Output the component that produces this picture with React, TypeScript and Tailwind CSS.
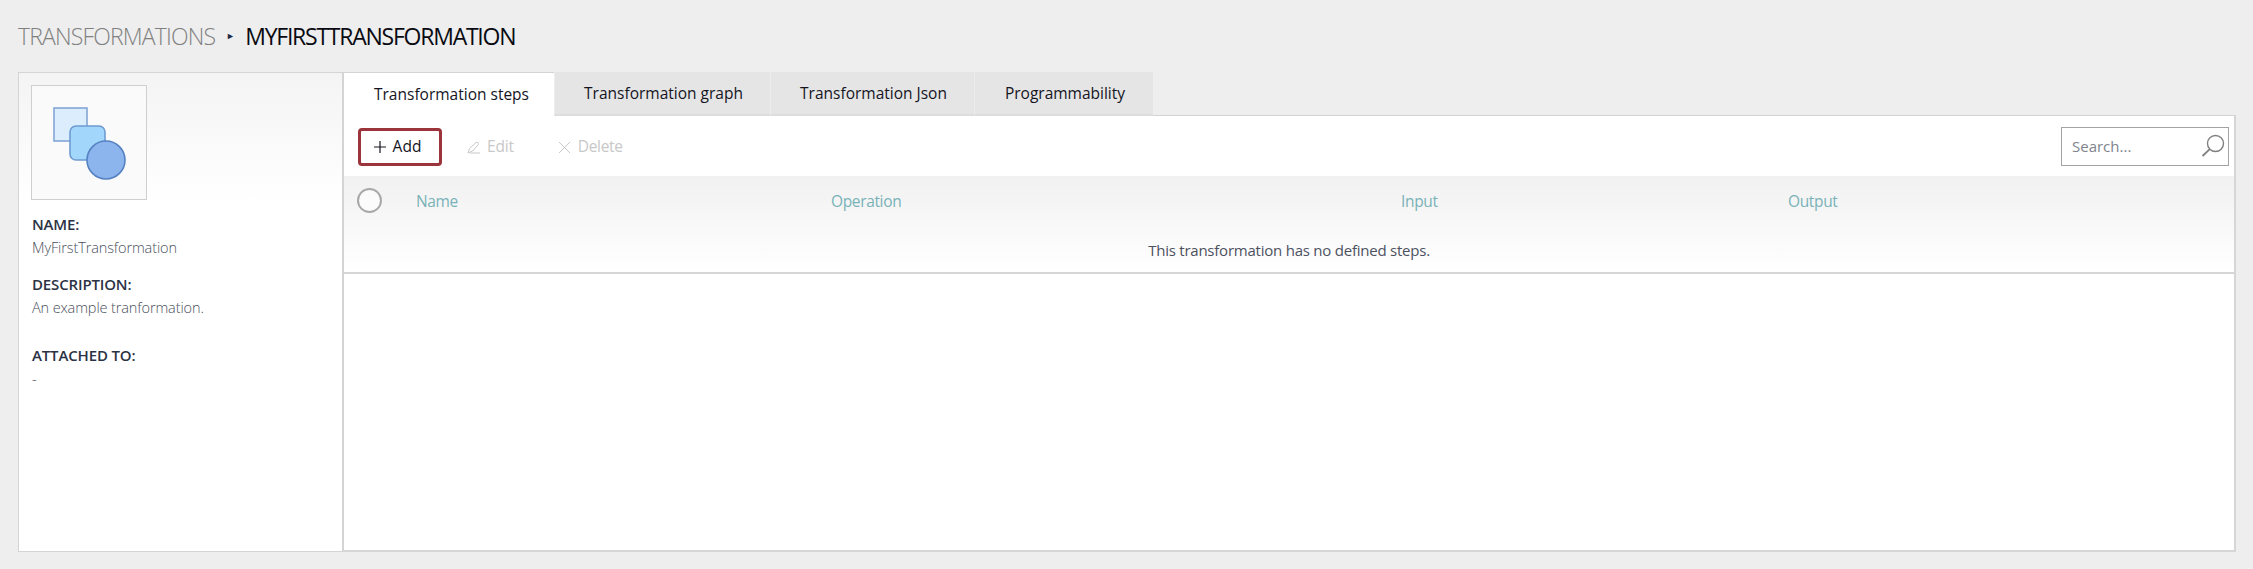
import React from 'react'

const font = { fontFamily: '"Open Sans", "Noto Sans", sans-serif' }

const tabs = ['Transformation graph', 'Transformation Json', 'Programmability']
const tabWidths = ['w-[216px]', 'w-[204px]', 'w-[179px]']

const ShapesIcon = () => (
  <svg width="74" height="74" viewBox="0 0 74 74">
    <rect x="1" y="1" width="33" height="33" fill="#dceefe" stroke="#83a6d6" strokeWidth="1.6" />
    <rect x="17" y="19" width="35" height="34" rx="6" fill="#a3d6fb" stroke="#6f9bd1" strokeWidth="1.6" />
    <circle cx="53" cy="53" r="19" fill="#8cb4ed" stroke="#5582c2" strokeWidth="1.6" />
  </svg>
)

const Field = ({ label, value, className = '' }: { label: string; value: string; className?: string }) => (
  <div className={className}>
    <div className="text-[15px] leading-[24px] font-semibold text-[#2b3244] tracking-[-0.15px]">{label}</div>
    <div className="text-[14.5px] leading-[24px] font-light text-[#4a4f5c] tracking-[-0.12px]">{value}</div>
  </div>
)

export default function App() {
  return (
    <div className="w-[2253px] h-[569px] bg-[#eeeeee] overflow-hidden pt-[19px] pl-[18px]" style={font}>
      <div className="flex items-center h-[34px] text-[23px] tracking-[-0.84px] font-light">
        <span className="text-[#808080]">TRANSFORMATIONS</span>
        <span className="mx-[11px] text-[9px] text-[#1f2a44]">►</span>
        <span className="text-[#0a0a12] font-normal tracking-[-1.24px]">MYFIRSTTRANSFORMATION</span>
      </div>

      <div className="flex w-[2218px] h-[480px] mt-[19px]">
        <aside className="w-[326px] shrink-0 border border-[#d4d4d4] border-r-2 bg-gradient-to-b from-[#f4f4f4] to-white to-[130px] pt-[12px] pl-[12px]">
          <div className="w-[116px] h-[115px] border border-[#cfcfcf] bg-[#fafafa] flex pl-[21px] pt-[21px]">
            <ShapesIcon />
          </div>
          <Field label="NAME:" value="MyFirstTransformation" className="mt-[12px] pl-[1px]" />
          <Field label="DESCRIPTION:" value="An example tranformation." className="mt-[12px] pl-[1px]" />
          <Field label="ATTACHED TO:" value="-" className="mt-[23px] pl-[1px]" />
        </aside>

        <main className="flex-1 flex flex-col">
          <div className="flex h-[44px] shrink-0">
            <div className="w-[210px] bg-white border-t border-[#d4d4d4] flex items-center justify-center text-[15.5px] pt-[1px] pl-[5px] text-[#14141e]">
              Transformation steps
            </div>
            {tabs.map((tab, i) => (
              <div
                key={tab}
                className={`${tabWidths[i]} bg-[#e5e5e5] border-b-2 border-[#dddddd] border-l border-l-[#ededed] flex items-center justify-center text-[15.5px] pt-[1px] pl-[2px] text-[#14141e]`}
              >
                {tab}
              </div>
            ))}
            <div className="flex-1 border-b border-[#d4d4d4]" />
          </div>

          <div className="flex-1 flex flex-col bg-white border-r-2 border-b-2 border-[#d6d6d6]">
            <div className="h-[60px] shrink-0 flex items-center pl-[14px] pr-[5px]">
              <button className="w-[84px] h-[38px] mt-[2px] flex items-center justify-center gap-[6px] pr-[6px] bg-white border-[3px] border-[#9c353b] rounded-[4px] text-[15.5px] text-[#14141e]">
                <svg width="14" height="14" viewBox="0 0 14 14" stroke="#14141e" strokeWidth="1.2">
                  <path d="M7 1v12M1 7h12" />
                </svg>
                Add
              </button>
              <div className="flex items-center gap-[6px] ml-[25px] mt-[2px] text-[15.5px] tracking-[-0.2px] text-[#c8c8c8]">
                <svg width="14" height="14" viewBox="0 0 14 14" fill="none" stroke="#c8c8c8" strokeWidth="1">
                  <path d="M1 13l1.5-4.5L9 2.5c1.5-.8 2.8.6 2.5 2L5.5 11 1 13zM3 13h10" />
                </svg>
                Edit
              </div>
              <div className="flex items-center gap-[7px] ml-[44px] mt-[2px] text-[15.5px] tracking-[-0.3px] text-[#c8c8c8]">
                <svg width="13" height="13" viewBox="0 0 13 13" stroke="#c8c8c8" strokeWidth="1">
                  <path d="M1 1l11 11M12 1L1 12" />
                </svg>
                Delete
              </div>
              <div className="ml-auto w-[168px] h-[39px] border border-[#a3a3a3] flex items-center justify-between pl-[10px] pr-[3px] text-[15px] text-[#80848c]">
                <span>Search...</span>
                <svg width="24" height="24" viewBox="0 0 24 24" fill="none" stroke="#808080" strokeWidth="1.4">
                  <circle cx="14.5" cy="9.5" r="8" />
                  <path d="M8.8 15.2L1.5 22" strokeWidth="1.8" />
                </svg>
              </div>
            </div>

            <div className="h-[98px] shrink-0 border-b-2 border-[#d6d6d6] bg-gradient-to-b from-[#f1f1f1] to-white">
              <div className="grid grid-cols-[73px_414px_570px_387px_1fr] h-[48px] items-center text-[15.5px] tracking-[-0.35px] text-[#79b2b8]">
                <div className="pl-[13px]">
                  <div className="w-[25px] h-[25px] rounded-full border-2 border-[#a8a8a8] bg-white/60" />
                </div>
                <div className="pt-[3px] -ml-[1px]">Name</div>
                <div className="pt-[3px]">Operation</div>
                <div className="pt-[3px]">Input</div>
                <div className="pt-[3px]">Output</div>
              </div>
              <div className="text-center text-[15px] tracking-[-0.23px] leading-[24px] mt-[14px] text-[#4c5160]">
                This transformation has no defined steps.
              </div>
            </div>
          </div>
        </main>
      </div>
    </div>
  )
}
